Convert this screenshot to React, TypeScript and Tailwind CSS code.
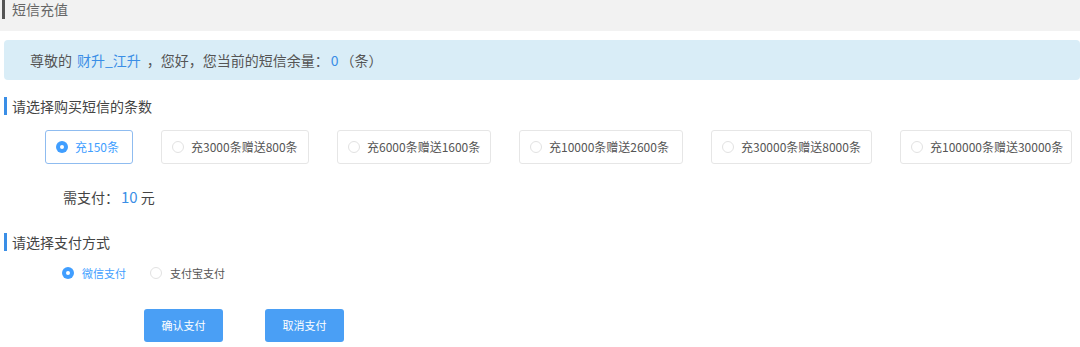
import React from "react";

const options = [
  { label: "充150条", cls: "w-[88px]" },
  { label: "充3000条赠送800条", cls: "w-[148px]" },
  { label: "充6000条赠送1600条", cls: "w-[154px]" },
  { label: "充10000条赠送2600条", cls: "w-[164px]" },
  { label: "充30000条赠送8000条", cls: "w-[161px]" },
  { label: "充100000条赠送30000条", cls: "w-[172px]" },
];

function Radio({ checked }: { checked: boolean }) {
  return checked ? (
    <span className="flex h-[12px] w-[12px] shrink-0 items-center justify-center rounded-full bg-[#409eff]">
      <span className="h-[4px] w-[4px] rounded-full bg-white" />
    </span>
  ) : (
    <span className="block h-[12px] w-[12px] shrink-0 rounded-full border border-[#e2e2e2] bg-white" />
  );
}

function SectionTitle({ text }: { text: string }) {
  return (
    <div className="flex h-[18px] items-center">
      <span className="ml-[4px] h-[18px] w-[3px] bg-[#3a8ee6]" />
      <span className="ml-[5px] text-[14px] leading-[18px] text-[#444]">{text}</span>
    </div>
  );
}

export default function App() {
  const font = { fontFamily: '"Noto Sans CJK SC", "Noto Sans", sans-serif' };
  return (
    <div className="h-[347px] w-[1080px] overflow-hidden bg-white" style={font}>
      <div className="flex h-[31px] items-start bg-[#f2f2f2]">
        <span className="ml-[2px] h-[19px] w-[3px] bg-[#555]" />
        <span className="ml-[7px] text-[14px] leading-[18px] text-[#666]">短信充值</span>
      </div>
      <div className="ml-[4px] mt-[9px] flex h-[40px] items-center rounded-[4px] bg-[#d9edf7] pl-[26px] text-[14px] text-[#555]">
        <span>尊敬的</span>
        <span className="ml-[5px] text-[#3a8ee6]">财升_江升</span>
        <span className="ml-[6px]">，您好，您当前的短信余量：</span>
        <span className="ml-[2px] text-[#3a8ee6]">0</span>
        <span className="ml-[2px]">（条）</span>
      </div>
      <div className="mt-[17px]">
        <SectionTitle text="请选择购买短信的条数" />
      </div>
      <div className="ml-[45px] mt-[15px] flex gap-[28px]">
        {options.map((o, i) => (
          <div
            key={o.label}
            className={`flex h-[34px] items-center gap-[7px] rounded-[3px] border pl-[10px] text-[12px] ${o.cls} ${
              i === 0 ? "border-[#8fbcf0] text-[#409eff]" : "border-[#e6e6e6] text-[#555]"
            }`}
          >
            <Radio checked={i === 0} />
            <span className="whitespace-nowrap">{o.label}</span>
          </div>
        ))}
      </div>
      <div className="ml-[63px] mt-[22px] flex h-[22px] items-center text-[14px] text-[#444]">
        <span>需支付：</span>
        <span className="ml-[2px] text-[15px] text-[#3a8ee6]">10</span>
        <span className="ml-[3px]">元</span>
      </div>
      <div className="mt-[25px]">
        <SectionTitle text="请选择支付方式" />
      </div>
      <div className="ml-[62px] mt-[14px] flex h-[16px] items-center text-[11px]">
        <Radio checked />
        <span className="ml-[8px] text-[#409eff]">微信支付</span>
        <span className="ml-[24px] flex items-center">
          <Radio checked={false} />
        </span>
        <span className="ml-[8px] text-[#555]">支付宝支付</span>
      </div>
      <div className="ml-[144px] mt-[28px] flex gap-[42px]">
        <button className="h-[33px] w-[79px] rounded-[3px] bg-[#4a9ff5] text-[11px] text-white">确认支付</button>
        <button className="h-[33px] w-[79px] rounded-[3px] bg-[#4a9ff5] text-[11px] text-white">取消支付</button>
      </div>
    </div>
  );
}
